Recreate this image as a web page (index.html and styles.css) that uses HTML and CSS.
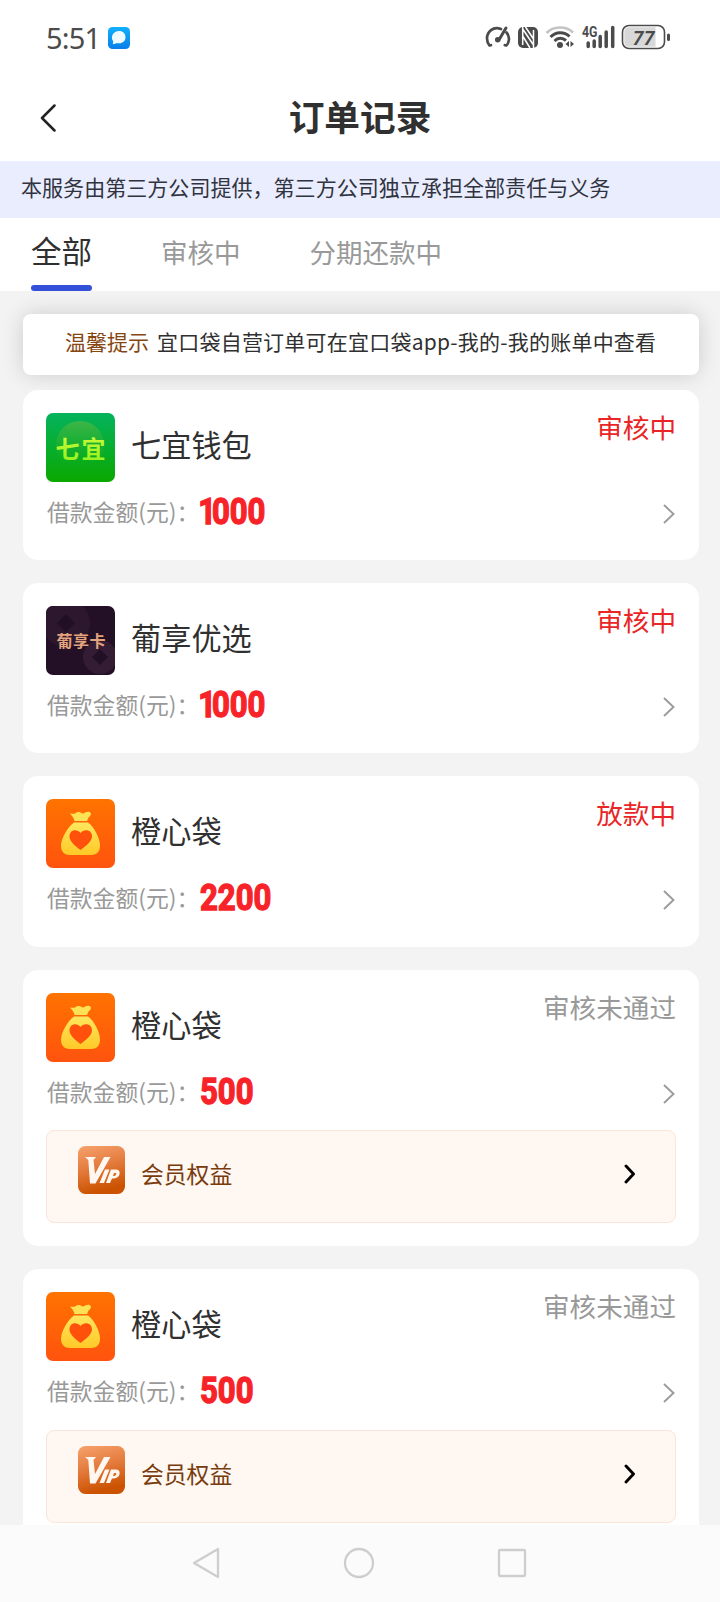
FILE: index.html
```html
<!DOCTYPE html>
<html lang="zh-CN">
<head>
<meta charset="utf-8">
<meta name="viewport" content="width=720">
<title>订单记录</title>
<link rel="stylesheet" href="styles.css">
</head>
<body>
<svg class="sprite" width="0" height="0" aria-hidden="true">
  <defs>
    <linearGradient id="orange" x1="0" y1="0" x2="0" y2="1"><stop offset="0" stop-color="#ff7300"/><stop offset="1" stop-color="#ff530e"/></linearGradient>
    <linearGradient id="gold" x1="0" y1="0" x2="0" y2="1"><stop offset="0" stop-color="#ffe65e"/><stop offset="1" stop-color="#ffc927"/></linearGradient>
    <linearGradient id="copper" x1="0" y1="0" x2="0.25" y2="1"><stop offset="0" stop-color="#f6a26d"/><stop offset="0.5" stop-color="#e47b3d"/><stop offset="1" stop-color="#cb5200"/></linearGradient>
    <linearGradient id="green" x1="0" y1="0" x2="0" y2="1"><stop offset="0" stop-color="#04b35c"/><stop offset="1" stop-color="#0aa800"/></linearGradient>
    <linearGradient id="glow" x1="0" y1="0" x2="0" y2="1"><stop offset="0" stop-color="#3fb548"/><stop offset="1" stop-color="#12ad18" stop-opacity="0"/></linearGradient>
    <linearGradient id="lime" x1="0" y1="0" x2="0" y2="1"><stop offset="0" stop-color="#d9fa3e"/><stop offset="1" stop-color="#8df11c"/></linearGradient>
    <linearGradient id="sky" x1="0" y1="0" x2="0" y2="1"><stop offset="0" stop-color="#12b0fb"/><stop offset="1" stop-color="#087ee9"/></linearGradient>
  </defs>
  <symbol id="bag" viewBox="0 0 69 69">
    <rect width="69" height="69" fill="url(#orange)"/>
    <path d="M24 14.5C26.5 14.5 28.5 15.5 30 13.8C32 12.3 34.500 13 36 14.300C38 15.300 40 12 43.500 13C46 14 45 17 42.500 18.500L41 22H28.500C28 18.500 25.500 16.500 24 14.500Z" fill="#ffe156"/>
    <path d="M28 23.500H42C48.500 28 54 40 54 46.500C54 53 50.500 56 45 56H24C18.500 56 15 53 15 46.500C15 40 21.500 28 28 23.500Z" fill="url(#gold)"/>
    <path d="M34.500 51C29 47 23.500 42.500 23.500 37.300C23.500 30.500 31 29.300 34.500 34C38 29.300 46 30.500 46 37.300C46 42.500 40 47 34.500 51Z" fill="#ff510b"/>
  </symbol>
  <symbol id="vip" viewBox="0 0 47 48">
    <rect width="47" height="48" rx="7.500" fill="url(#copper)"/>
    <path d="M7 11H18L15.500 14L17 28L26 11H32.500L17.500 37.500H12L10.300 14Z" fill="#fff7f0"/>
    <path d="M27 23.500H31.500L26 37H21.500ZM33 23.500H38.500C43.500 23.500 42.500 32.500 36 32.500H34L32 37H28ZM36 27L35 30C38 30.500 39.500 27 37.500 27Z" fill="#fff7f0" fill-rule="evenodd"/>
  </symbol>
  <symbol id="next" viewBox="0 0 12 20"><path d="M1 1L10.500 10L1 19" fill="none" stroke="#9b9b9b" stroke-width="1.900"/></symbol>
  <symbol id="next-bold" viewBox="0 0 12 20"><path d="M2 2L9.500 10L2 18" fill="none" stroke="#000" stroke-width="2.900" stroke-linecap="round" stroke-linejoin="round"/></symbol>
</svg>

<div class="status-bar">
  <span class="clock">5:51</span>
  <svg class="chat" width="22" height="22" viewBox="0 0 22 22"><rect width="22" height="22" rx="4.500" fill="url(#sky)"/><path d="M11 4C15 4 17.500 6.700 17.500 10.200C17.500 13.700 15 16.200 11 16.200C9.500 16.200 8.500 16 7.500 16.500C6.500 17.100 5 17.200 4.500 17C5.300 16.200 5.300 15.500 5.100 14.200C2 9.500 5.500 4 11 4Z" fill="#eefaff"/></svg>
  <svg class="indicators" width="190" height="28" viewBox="0 0 190 28" fill="none" stroke="#4b4b4b">
    <path d="M17 6C9 3 3 9 3 15.500C3 18.500 4 20.500 5.500 22.500L7 22.200M22.500 9.500C26.500 14 25 20 22.300 22.500L20.800 22.200" stroke-width="2.700" stroke-linecap="round" stroke-linejoin="round"/>
    <path d="M22 5L15.200 16.500" stroke-width="3" stroke-linecap="round"/><circle cx="13.700" cy="16.700" r="2" stroke-width="1.500" fill="#4b4b4b"/>
    <rect x="34" y="4" width="20" height="21" rx="5" fill="#4b4b4b" stroke="none"/>
    <path d="M38.700 3V22M38.700 6L49.500 22M49.500 7V26M41.500 4L49.500 16M38.700 13L46 25" stroke="#fff" stroke-width="1.500"/>
    <path d="M62.500 10C69 3 82 2.500 89 9.500" stroke="#c4c4c4" stroke-width="2.700"/>
    <path d="M66.500 14C72 8.500 80 8.500 85.500 13.500M70.500 18C74 14.500 78.500 14.500 82 17.500" stroke-width="3"/>
    <circle cx="76" cy="22" r="3" fill="#4b4b4b" stroke="none"/><path d="M85 18V24L81.500 21ZM86.500 18V24L90 21Z" fill="#4b4b4b" stroke="none"/>
    <text class="net" x="98" y="14" textLength="15.500" lengthAdjust="spacingAndGlyphs">4G</text>
    <path d="M104.200 20V23.500M110.200 18V23.500M116.200 13.500V23.500M122.200 9V23.500M128.700 4.500V23.500" stroke-width="3.500" stroke-linecap="round"/>
    <rect x="138.500" y="2.500" width="42" height="23" rx="6.500" fill="#fff" stroke-width="1.600"/>
    <path d="M145 4.200H171.500V23.800H145C142 23.800 140.300 22 140.300 19V9C140.300 6 142 4.200 145 4.200Z" fill="#d8d8d8" stroke="none"/>
    <path d="M184.500 12V16.500" stroke-width="3" stroke-linecap="round"/>
    <text class="charge" x="148.500" y="21.500" textLength="22" lengthAdjust="spacingAndGlyphs">77</text>
  </svg>
</div>

<header class="header">
  <svg class="back" width="16" height="28" viewBox="0 0 16 28"><path d="M14.500 1.500L2 14L14.500 26.500" fill="none" stroke="#222" stroke-width="2.500" stroke-linecap="round" stroke-linejoin="round"/></svg>
  <h1 class="title">订单记录</h1>
</header>
<div class="notice">本服务由第三方公司提供，第三方公司独立承担全部责任与义务</div>
<nav class="tabs">
  <div class="tab active">全部</div><div class="tab">审核中</div><div class="tab">分期还款中</div>
</nav>

<main class="content">
  <div class="tip"><b class="tip-label">温馨提示</b><span class="tip-text">宜口袋自营订单可在宜口袋app-我的-我的账单中查看</span></div>
  <div class="orders">
    <article class="card">
      <div class="top">
        <svg class="logo" viewBox="0 0 69 69"><rect width="69" height="69" fill="url(#green)"/><circle cx="34" cy="32" r="24" fill="url(#glow)"/><text class="logo-green" x="9.500" y="45" textLength="50" fill="url(#lime)">七宜</text></svg>
        <h2 class="name">七宜钱包</h2><span class="state">审核中</span>
      </div>
      <div class="row"><span class="label">借款金额(元)：</span><strong class="amount"><span class="one">1</span>000</strong><svg class="next"><use href="#next"/></svg></div>
    </article>
    <article class="card">
      <div class="top">
        <svg class="logo" viewBox="0 0 69 69"><rect width="69" height="69" fill="#230f26"/><circle cx="20" cy="17" r="24" fill="#2d172e"/><circle cx="54" cy="51" r="17" fill="#341c34"/><path d="M20 8L29 17L20 26L11 17ZM54 43L62 51L54 59L46 51Z" fill="#211025"/><text class="logo-card" x="10.500" y="41" textLength="49">葡享卡</text></svg>
        <h2 class="name">葡享优选</h2><span class="state">审核中</span>
      </div>
      <div class="row"><span class="label">借款金额(元)：</span><strong class="amount"><span class="one">1</span>000</strong><svg class="next"><use href="#next"/></svg></div>
    </article>
    <article class="card tall">
      <div class="top"><svg class="logo"><use href="#bag"/></svg><h2 class="name">橙心袋</h2><span class="state">放款中</span></div>
      <div class="row"><span class="label">借款金额(元)：</span><strong class="amount">2200</strong><svg class="next"><use href="#next"/></svg></div>
    </article>
    <article class="card with-vip">
      <div class="top"><svg class="logo"><use href="#bag"/></svg><h2 class="name">橙心袋</h2><span class="state rejected">审核未通过</span></div>
      <div class="row"><span class="label">借款金额(元)：</span><strong class="amount">500</strong><svg class="next"><use href="#next"/></svg></div>
      <div class="vip"><svg class="vip-icon"><use href="#vip"/></svg><span class="vip-text">会员权益</span><svg class="vip-next"><use href="#next-bold"/></svg></div>
    </article>
    <article class="card with-vip last">
      <div class="top"><svg class="logo"><use href="#bag"/></svg><h2 class="name">橙心袋</h2><span class="state rejected">审核未通过</span></div>
      <div class="row"><span class="label">借款金额(元)：</span><strong class="amount">500</strong><svg class="next"><use href="#next"/></svg></div>
      <div class="vip"><svg class="vip-icon"><use href="#vip"/></svg><span class="vip-text">会员权益</span><svg class="vip-next"><use href="#next-bold"/></svg></div>
    </article>
  </div>
</main>

<footer class="system-nav">
  <svg width="30" height="34" viewBox="0 0 30 34"><path d="M27 3V31L3 17Z"/></svg>
  <svg width="34" height="34" viewBox="0 0 34 34"><circle cx="17" cy="17" r="14"/></svg>
  <svg width="30" height="34" viewBox="0 0 30 34"><rect x="2" y="4" width="26" height="26" rx="1"/></svg>
</footer>
</body>
</html>
```
FILE: styles.css
```css
* { box-sizing: border-box; }
body {
  margin: 0;
  width: 720px;
  height: 1602px;
  display: flex;
  flex-direction: column;
  overflow: hidden;
  background: #fff;
  color: #303030;
  font-family: "Noto Sans CJK SC", sans-serif;
}
svg { display: block; flex: none; }
.sprite { position: absolute; }
.status-bar { height: 76px; flex: none; display: flex; align-items: center; padding: 0 48px 0 46px; }
.clock { width: 52px; font: 29px/34px "Noto Sans", sans-serif; letter-spacing: -.8px; color: #4b4b4b; }
.chat { margin-left: 10px; }
.indicators { margin-left: auto; margin-right: -2px; margin-top: -2px; }
.net { font: bold 14px Roboto, sans-serif; fill: #4b4b4b; stroke: none; }
.charge { font: italic 600 20px "Noto Sans", sans-serif; fill: #4b4b4b; stroke: none; }

.header { height: 85px; flex: none; display: grid; grid-template-columns: 60px 1fr 60px; align-items: center; padding-bottom: 3px; }
.back { margin-left: 40px; margin-top: 2px; }
.title { margin: -2px 0 0; text-align: center; font-size: 35.7px; line-height: 44px; font-weight: 700; }
.notice { height: 57px; flex: none; padding-left: 21px; background: #eaedfd; color: #303340; font-size: 21.05px; line-height: 53px; }
.tabs { height: 73px; flex: none; display: flex; gap: 69px; padding-left: 31px; color: #999; font-size: 26.5px; line-height: 68px; }
.tab { height: 73px; }
.active { position: relative; color: #303030; font-size: 30.5px; line-height: 65px; }
.active::after { content: ""; position: absolute; left: 0; right: 0; bottom: 0; height: 6px; border-radius: 3px; background: #3550d8; }

.content { flex: 1; min-height: 0; overflow: hidden; padding: 23px 21px 0 23px; background: #f3f3f3; }
.tip { height: 61px; display: flex; gap: 8px; padding-left: 42px; border-radius: 8px; background: #fff; box-shadow: 0 0 22px rgba(0, 0, 0, .16); font-size: 21px; line-height: 54px; white-space: nowrap; }
.tip-label { font-weight: 400; color: #854611; }
.tip-text { letter-spacing: .22px; }
.orders { display: flex; flex-direction: column; gap: 23px; margin-top: 15px; position: relative; }
.card { height: 170px; flex: none; padding: 23px; border-radius: 15px; background: #fff; }
.tall { height: 171px; }
.with-vip { height: 276px; }
.top { height: 69px; display: flex; }
.logo { width: 69px; height: 69px; border-radius: 7px; }
.logo-green { font: 700 24px "Noto Sans CJK SC", sans-serif; }
.logo-card { font: bold 16px "Noto Sans CJK SC", sans-serif; fill: #e3a47d; }
.name { margin: 0 0 0 16px; font-size: 30.2px; line-height: 62px; font-weight: 400; }
.state { margin-left: auto; font-size: 26.6px; line-height: 28px; color: #e92526; }
.rejected { color: #999; }
.row { height: 62px; display: flex; align-items: center; }
.label { margin-top: -3px; margin-left: 1px; font-size: 22.8px; line-height: 36px; color: #999; white-space: nowrap; }
.amount { font: bold 37px/40px Roboto, sans-serif; margin-top: -2px; margin-left: 1px; color: #f72329; transform: scaleX(.84); transform-origin: left; -webkit-text-stroke: 1.4px #f72329; }
.one { letter-spacing: -5px; margin-left: -2px; }
.next { width: 12px; height: 20px; margin: 1px 1px 0 auto; }
.vip { height: 93px; margin-top: 6px; padding: 15px 40px 0 31px; display: flex; align-items: flex-start; border: 1px solid #fae5d8; border-radius: 8px; background: #fff7f1; }
.last .vip { margin-top: 7px; }
.vip-icon { width: 47px; height: 48px; }
.vip-text { margin-left: 16px; font-size: 22.8px; line-height: 56px; color: #773b0c; }
.vip-next { width: 12px; height: 20px; margin: 18px -1px 0 auto; }

.system-nav { height: 77px; flex: none; display: flex; justify-content: space-between; padding: 21px 193px 0 191px; background: #fbfbfb; }
.system-nav svg { fill: none; stroke: #cecece; stroke-width: 2.3; stroke-linejoin: round; }
```
